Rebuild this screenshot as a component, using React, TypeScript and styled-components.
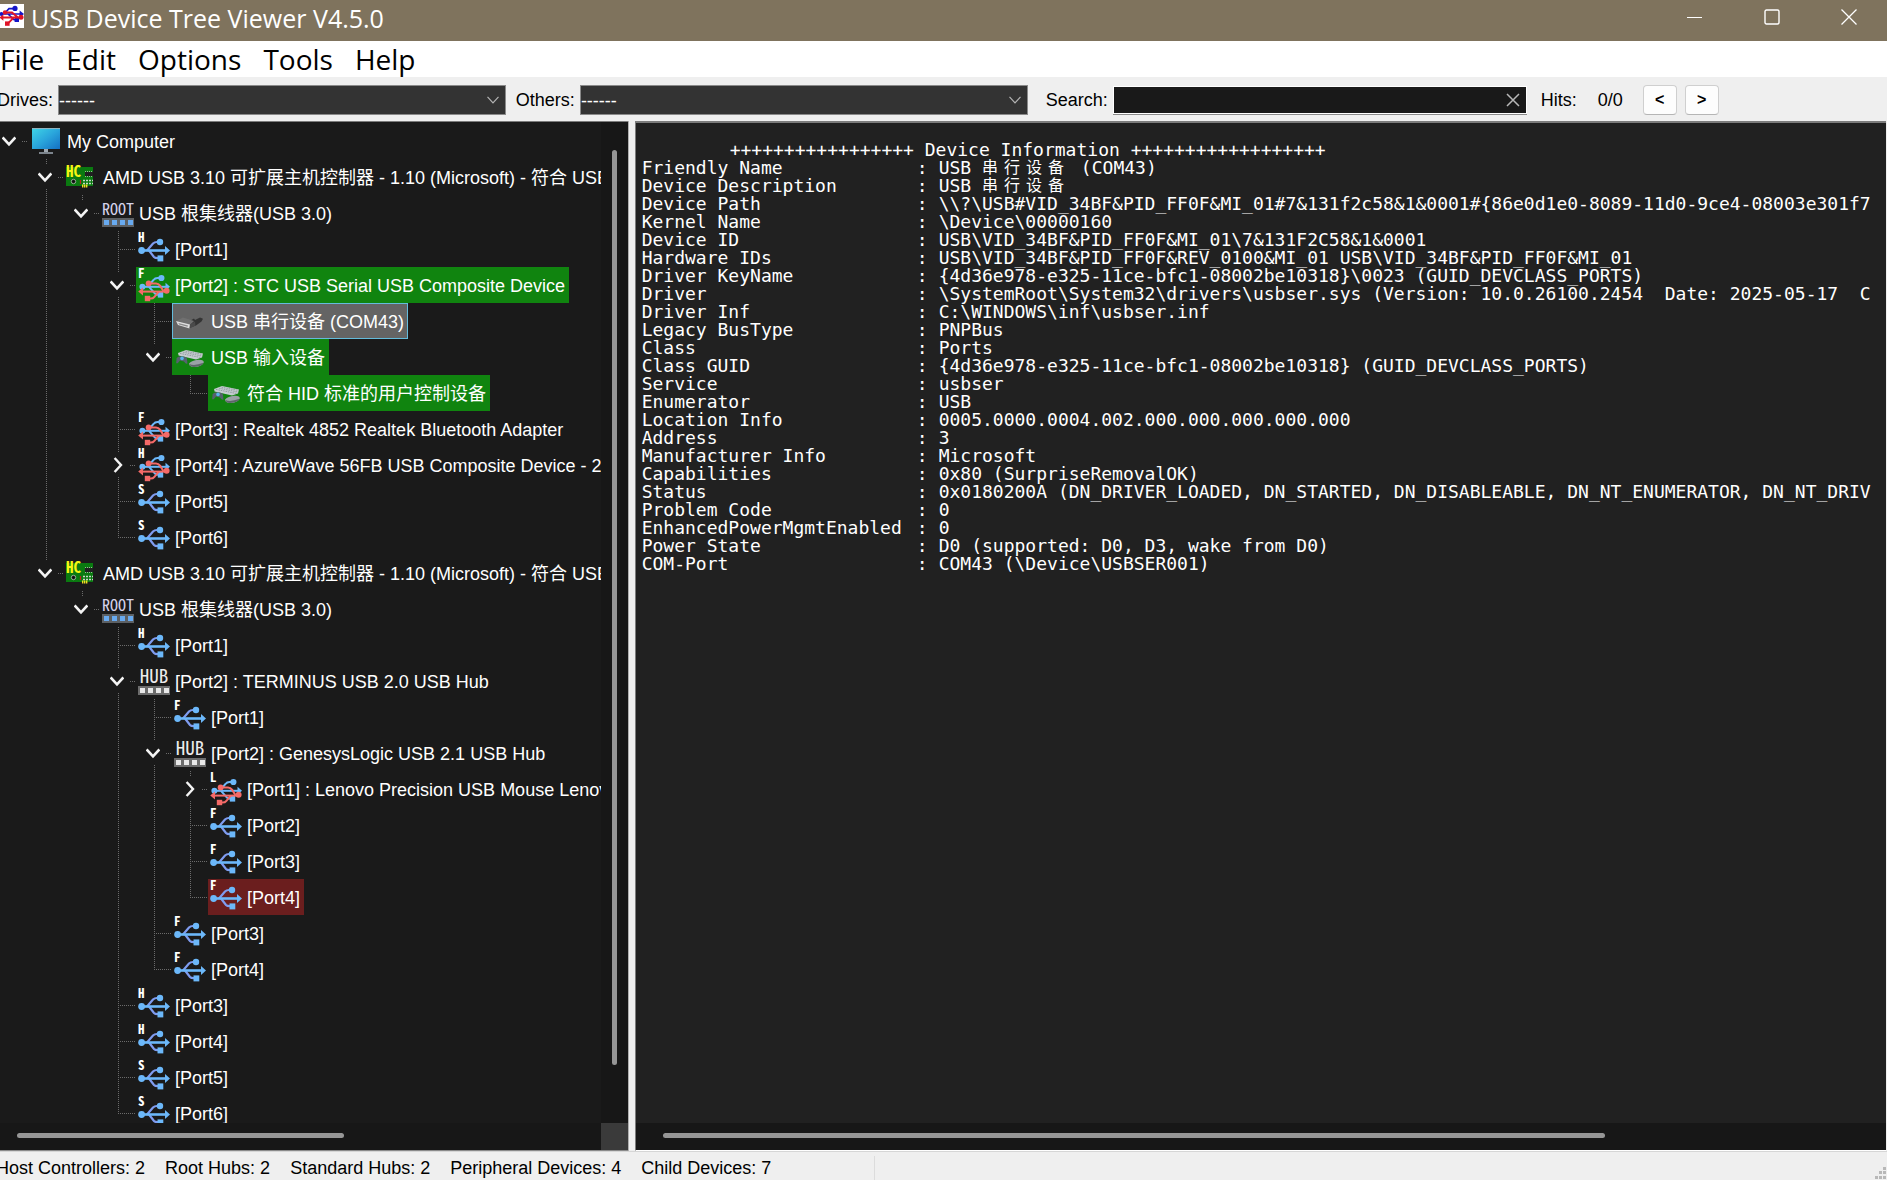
import React, { useState } from 'react';
import styled, { createGlobalStyle, css } from 'styled-components';

const GlobalStyle = createGlobalStyle`
  * { box-sizing: border-box; }
  body { margin: 0; background: #efefef; overflow: hidden; }
  button, input, select { font: inherit; }
`;

const uiFont = css`font-family: "Liberation Sans", "Noto Sans CJK SC", sans-serif;`;
const shellFont = css`font-family: "Open Sans", "Noto Sans CJK SC", sans-serif;`;

const Window = styled.div`
  ${uiFont}
  display: flex;
  flex-direction: column;
  height: 100vh;
  font-size: 18px;
  color: #000;
  background: #efefef;
`;

const TitleBar = styled.header`
  ${shellFont}
  display: flex;
  align-items: flex-start;
  height: 41px;
  flex: none;
  padding-top: 4px;
  background: #7f735d;
  color: #fff;
`;

const Title = styled.h1`
  margin: 0;
  padding-left: 6px;
  flex: 1;
  font-size: 25px;
  line-height: 28px;
  font-weight: 400;
`;

const Caption = styled.button`
  width: 77px;
  height: 26px;
  padding: 0;
  border: 0;
  background: none;
  color: inherit;
  display: grid;
  place-items: center;
`;

const MenuBar = styled.nav`
  ${shellFont}
  display: flex;
  flex: none;
  height: 36px;
  gap: 22px;
  background: #fff;
`;

const MenuItem = styled.button`
  padding: 0;
  border: 0;
  background: none;
  font-size: 28px;
  line-height: 36px;
`;

const Toolbar = styled.div`
  display: flex;
  align-items: center;
  flex: none;
  height: 44px;
  padding-top: 2px;
  overflow: hidden;
`;

const Label = styled.label<{ $lead: number }>`
  white-space: nowrap;
  margin-left: ${p => p.$lead}px;
  margin-right: 5px;
`;

const SelectBox = styled.div`
  position: relative;
  display: flex;
  flex: 450 1 0;
  height: 30px;
  svg { position: absolute; right: 7px; top: 9px; pointer-events: none; color: #b4b4b4; }
`;

const Select = styled.select`
  width: 100%;
  appearance: none;
  border: 1px solid #8a8a8a;
  border-radius: 0;
  background: #333;
  color: #fff;
  padding: 2px 0 0;
`;

const SearchBox = styled.div`
  display: flex;
  align-items: center;
  flex: 414 1 0;
  height: 28px;
  background: #191919;
  border: 1px solid #fff;
  box-shadow: 0 1px 0 #8a8a8a;
`;

const SearchInput = styled.input`
  flex: 1;
  min-width: 0;
  border: 0;
  outline: 0;
  background: none;
  color: #fff;
`;

const ClearButton = styled.button`
  display: grid;
  place-items: center;
  width: 26px;
  height: 26px;
  padding: 0;
  border: 0;
  background: none;
  color: #b8b8b8;
`;

const Hits = styled.div`
  display: flex;
  gap: 21px;
  padding: 0 20px 0 14px;
`;

const StepButton = styled.button`
  width: 34px;
  height: 30px;
  margin-right: 8px;
  padding: 0;
  border: 1px solid #cfcfcf;
  border-bottom-color: #b5b5b5;
  border-radius: 4px;
  background: #fdfdfd;
  font-weight: 700;
  font-size: 16px;
`;

const ToolbarEnd = styled.div`
  flex: 161 1 0;
`;

const Main = styled.main`
  display: flex;
  flex: 1;
  min-height: 0;
`;

const TreePane = styled.section`
  flex: 628 1 0;
  min-width: 0;
  display: grid;
  grid-template: minmax(0, 1fr) 27px / minmax(0, 1fr) 27px;
  background: #1a1a1a;
  color: #fff;
  border-top: 1px solid #7c7c7c;
  border-bottom: 1px solid #8a8a8a;
`;

const InfoPane = styled.section`
  flex: 1251 1 0;
  min-width: 0;
  margin-right: 1px;
  display: grid;
  grid-template: minmax(0, 1fr) 27px / minmax(0, 1fr);
  background: #212121;
  color: #fff;
  border-top: 2px solid #7c7c7c;
  border-left: 1px solid #7c7c7c;
  border-bottom: 1px solid #fff;
`;

const Splitter = styled.div`
  flex: none;
  width: 7px;
  background: #efefef;
  border-left: 1px solid #b0b0b0;
`;

const Track = styled.div<{ $vertical?: boolean; $lead: number }>`
  display: flex;
  flex-direction: ${p => (p.$vertical ? 'column' : 'row')};
  align-items: center;
  background: #171717;
  padding: ${p => (p.$vertical ? `${p.$lead}px 0 0` : `0 0 2px ${p.$lead}px`)};
`;

const Thumb = styled.div<{ $vertical?: boolean; $share: number }>`
  background: #969696;
  border-radius: 3px;
  ${p => (p.$vertical ? `width: 5px; height: ${p.$share}%;` : `height: 5px; width: ${p.$share}%;`)}
`;

const Corner = styled.div`
  background: #3a3a3a;
`;

const Tree = styled.ul`
  margin: 0;
  padding: 1px 0 0;
  list-style: none;
  overflow: hidden;
`;

const Row = styled.li`
  display: flex;
  height: 36px;
`;

type Vertical = 'none' | 'full' | 'end' | 'stub' | 'gap';

const dotsDown = 'repeating-linear-gradient(#6c6c6c 0 1px, transparent 1px 2px)';
const dotsAcross = 'repeating-linear-gradient(90deg, #6c6c6c 0 1px, transparent 1px 2px)';

const verticalLayers: Record<Vertical, string> = {
  none: 'none',
  full: `${dotsDown} right 17px top / 1px 36px no-repeat`,
  end: `${dotsDown} right 17px top / 1px 18px no-repeat`,
  stub: `${dotsDown} right 17px top / 1px 5px no-repeat`,
  gap: `${dotsDown} right 17px top / 1px 5px no-repeat, ${dotsDown} right 17px bottom / 1px 6px no-repeat`,
};

const Guide = styled.span<{ $first: boolean; $vertical: Vertical }>`
  flex: none;
  display: flex;
  align-items: center;
  justify-content: flex-end;
  width: ${p => (p.$first ? 28 : 36)}px;
  background: ${p => verticalLayers[p.$vertical]};
`;

const Connector = styled.span<{ $short: boolean }>`
  flex: none;
  width: ${p => (p.$short ? 6 : 18)}px;
  height: 1px;
  background: ${dotsAcross};
`;

const Toggle = styled.button`
  flex: none;
  width: 18px;
  height: 18px;
  margin-right: 4px;
  padding: 0;
  border: 0;
  background: none;
  color: #f4f4f4;
  display: grid;
  place-items: center;
`;

type Tone = 'plain' | 'green' | 'selected' | 'red';

const toneStyles = {
  plain: css``,
  green: css`background: #10840f;`,
  selected: css`background: #646464; box-shadow: inset 0 0 0 1px #64bcdc;`,
  red: css`background: #6b1e1e;`,
};

const Item = styled.span<{ $tone: Tone }>`
  flex: none;
  display: flex;
  align-items: center;
  gap: 5px;
  padding: 0 4px 0 2px;
  white-space: nowrap;
  ${p => toneStyles[p.$tone]}
`;

const ItemText = styled.span`
  line-height: 20px;
  padding-top: 2px;
`;

const NodeSvg = styled.svg`
  width: 32px;
  height: 36px;
  flex: none;
  overflow: visible;
`;

const ReportBox = styled.div`
  padding: 18px 4px 0 6px;
  overflow: hidden;
`;

const Report = styled.table`
  border-collapse: collapse;
  font-family: "DejaVu Sans Mono", "Noto Sans CJK SC", monospace;
  font-size: 18px;
  line-height: 18px;
  white-space: pre;
  caption { padding-left: 88px; text-align: left; }
  th, td { padding: 0; height: 18px; text-align: left; font-weight: 400; vertical-align: top; }
  th { min-width: 275px; }
  td:nth-child(2) { min-width: 22px; }
`;

const WideGlyph = styled.span`
  display: inline-block;
  width: 22px;
  height: 18px;
  font-size: 16px;
  line-height: 18px;
  vertical-align: top;
`;

const StatusBar = styled.footer`
  display: flex;
  align-items: center;
  flex: none;
  height: 29px;
  padding-top: 4px;
  border-top: 1px solid #d6d6d6;
  overflow: hidden;
`;

const Counter = styled.span`
  white-space: nowrap;
`;

const Counters = styled.div`
  display: flex;
  gap: 20px;
  flex: 878 1 0;
  height: 100%;
  margin-left: -4px;
  align-items: center;
  border-right: 1px solid #dcdcdc;
`;

const StatusEnd = styled.div`
  display: flex;
  justify-content: flex-end;
  align-items: flex-end;
  flex: 1013 1 0;
  height: 100%;
`;

/* ---------- drawings ---------- */

const BLUE = '#6cb8fa';
const RED = '#f46a68';
const ICON_FONT = 'Noto Sans Mono CJK SC, Noto Sans Mono CJK JP, Liberation Sans, sans-serif';

const Letter = ({ children }: { children: string }) => (
  <text x="0" y="11" fill="#fff" fontSize="13" fontWeight="700" fontFamily={ICON_FONT}>
    {children}
  </text>
);

const PortIcon = ({ speed }: { speed: string }) => (
  <NodeSvg viewBox="0 0 32 36" aria-hidden="true">
    <Letter>{speed}</Letter>
    <g fill="none" strokeWidth="2.2">
      <path d="M9 19.5 L15 12.6 Q16.5 11 19 11 H22" stroke="#7f9cf0" />
      <path d="M11 19.5 L16 26 Q17 27.2 20 27.2" stroke="#7f9cf0" />
      <path d="M3 19.5 H28" stroke={BLUE} strokeWidth="2.6" />
    </g>
    <g fill={BLUE}>
      <circle cx="3.6" cy="19.5" r="3.4" />
      <circle cx="22" cy="11" r="3.2" />
      <rect x="19.5" y="24.4" width="5.8" height="6" />
      <path d="M27 15 L32 19.5 L27 24 Z" />
    </g>
  </NodeSvg>
);

const DeviceIcon = ({ speed }: { speed: string }) => (
  <NodeSvg viewBox="0 0 32 36" aria-hidden="true">
    <Letter>{speed}</Letter>
    <g fill="none" stroke={BLUE} strokeWidth="2">
      <path d="M4 19.8 H28" />
      <path d="M10 19.5 L15.5 13 Q17 11 19.5 11 H23" />
      <path d="M11 19.8 L17 26.6 Q18 27.8 21 27.8" />
    </g>
    <g fill={BLUE}>
      <circle cx="4.4" cy="19.8" r="3" />
      <circle cx="23.4" cy="11" r="3.1" />
      <rect x="19.8" y="25" width="5.4" height="5.6" />
      <path d="M27.5 15.8 L32 19.8 L27.5 23.6 Z" />
    </g>
    <g fill="none" stroke={RED} strokeWidth="2">
      <path d="M4 24.6 H28" />
      <path d="M10.5 16.4 H18 Q20.5 16.4 22 18.6 L25.4 24" />
      <path d="M9.5 31.6 H12.5 Q15 31.6 16.4 29.8 L20.8 24.6" />
    </g>
    <g fill={RED}>
      <circle cx="10.6" cy="16.4" r="2.9" />
      <circle cx="28.6" cy="23.8" r="3" />
      <rect x="6.8" y="28.8" width="5.4" height="5.4" />
      <path d="M5 20.6 L0.2 24.6 L5 28.4 Z" />
    </g>
  </NodeSvg>
);

const HubIcon = ({ root }: { root?: boolean }) => (
  <NodeSvg viewBox="0 0 32 36" aria-hidden="true">
    <text
      x="16"
      y="20"
      textAnchor="middle"
      fill={root ? '#d4d2ea' : '#ececec'}
      fontSize={root ? 16 : 19}
      fontFamily={ICON_FONT}
    >
      {root ? 'ROOT' : 'HUB'}
    </text>
    <rect x="0" y="23" width="32" height="9" fill={root ? '#5c6064' : '#6c6c6c'} />
    {[2, 10, 18, 26].map(x => (
      <rect key={x} x={x} y="25" width="5" height="5" fill={root ? '#68aaf0' : '#e8e8e8'} />
    ))}
  </NodeSvg>
);

const ControllerIcon = () => (
  <NodeSvg viewBox="0 0 32 36" aria-hidden="true">
    <rect x="0" y="8" width="27" height="19" fill="#0a7a10" />
    <text x="0" y="18" fill="#f6f614" fontSize="15" fontWeight="700" fontFamily={ICON_FONT}>
      HC
    </text>
    <rect x="19" y="13" width="8" height="4" fill="#202020" />
    <path d="M19 12.5 H27 M19 17.5 H27" stroke="#9ab89a" strokeDasharray="1 1" />
    <circle cx="7.5" cy="22.5" r="2.2" fill="#101010" stroke="#b8c8b8" strokeWidth="0.8" />
    <path d="M17 21.5 H27 M17 24.5 H27" stroke="#c8d8c8" strokeWidth="1.4" strokeDasharray="2 1" />
    <path d="M14.5 21 V25" stroke="#c02020" strokeWidth="1.2" />
    <path d="M16 27 H22" stroke="#f0e020" strokeWidth="3" strokeDasharray="1.4 0.6" />
  </NodeSvg>
);

const ComputerIcon = () => (
  <NodeSvg viewBox="0 0 32 36" aria-hidden="true">
    <defs>
      <linearGradient id="screen" x1="0" y1="0" x2="1" y2="1">
        <stop offset="0" stopColor="#3fd6e6" />
        <stop offset="0.5" stopColor="#2aa6dc" />
        <stop offset="1" stopColor="#1470c4" />
      </linearGradient>
    </defs>
    <rect x="2" y="5" width="28" height="21" fill="url(#screen)" />
    <path d="M2 5.5 H30" stroke="#8fb4c0" />
    <path d="M14 26 H18 V29 H14 Z" fill="#a0a8b0" />
    <path d="M9 29 H23 V31 H9 Z" fill="#7c848c" />
  </NodeSvg>
);

const SerialIcon = () => (
  <NodeSvg viewBox="0 0 32 36" aria-hidden="true">
    <path d="M14 19 L20 15.5 L21 17 L26 14.6 L29 15.8 L27.5 18.6 L22 22.6 L15 25 Z" fill="#343434" />
    <path d="M3 17.6 L9 14.6 L20 18 L16 22 Z" fill="#707070" />
    <path d="M2 18 L16 21.6 L15.6 25.6 L4 22 Z" fill="#dedede" />
    <path d="M4.4 20 L14 22.6 L13.6 23.8 L5 21.4 Z" fill="#8a8a8a" />
    <path d="M16 21.6 L21 18.6 L21.4 22.4 L15.6 25.6 Z" fill="#4a4a4a" />
  </NodeSvg>
);

const InputIcon = () => (
  <NodeSvg viewBox="0 0 32 36" aria-hidden="true">
    <path d="M4 14 L12 11 L29 14.6 L28 18.4 L22 20.4 L4.6 16.4 Z" fill="#c4ccd0" />
    <path d="M6 14.4 L27 18.6 M9 13.2 L28 17 M11.6 12.2 L28.6 15.4" stroke="#8a9498" strokeWidth="0.8" strokeDasharray="1.6 0.8" />
    <path d="M2.6 19 Q5 16.6 9 17.6 Q12.6 18 13 20 L13.4 24.6 Q12 25.6 10 22.4 L6 21.6 Q3.4 25.4 2.2 24 Z" fill="#56626e" />
    <circle cx="8" cy="19.4" r="1.8" fill="#58b4ec" />
    <path d="M15 24.4 Q18 21.4 24 20.8 Q30 20.4 29.8 23.4 Q28 27.6 20 28 Q15 27.6 15 24.4 Z" fill="#9aa2a6" />
    <path d="M15.4 25 Q20 27.4 29.6 23.8 Q28 27.6 20 28 Q16 27.6 15.4 25 Z" fill="#5e666a" />
  </NodeSvg>
);

const AppIcon = () => (
  <svg width="25" height="24" viewBox="0 0 25 24" aria-hidden="true">
    <rect width="24" height="24" fill="#fff" />
    <g fill="none" stroke="#1414c8" strokeWidth="1.6">
      <path d="M0 10 H21 M4 10 L9 4.6 H15 M8 10 L14 15.6 H17" />
    </g>
    <g fill="#1414c8">
      <circle cx="1.4" cy="10" r="2" />
      <circle cx="15" cy="4.4" r="2.6" />
      <rect x="14.6" y="13.6" width="4.4" height="4.4" />
      <path d="M19.6 6.6 L24 10 L19.6 13.4 Z" />
    </g>
    <g fill="none" stroke="#e01428" strokeWidth="2">
      <path d="M2 13.4 H22 M5 8.4 H12 L18 13.4 M8 19.4 L14 13.4" />
    </g>
    <g fill="#e01428">
      <circle cx="5" cy="8.4" r="2.2" />
      <circle cx="21" cy="13.2" r="2.5" />
      <rect x="5" y="17.4" width="4.6" height="4.4" />
      <path d="M3.4 10.4 L-0.6 13.4 L3.4 16.8 Z" />
    </g>
  </svg>
);

const ChevronDown = ({ size = 14, weight = 2.6 }: { size?: number; weight?: number }) => (
  <svg width={size} height={size} viewBox="0 0 14 14" fill="none" stroke="currentColor" strokeWidth={weight} aria-hidden="true">
    <path d="M0.6 3.4 L7 10.4 L13.4 3.4" />
  </svg>
);

const ChevronRight = () => (
  <svg width="14" height="16" viewBox="0 0 14 16" fill="none" stroke="currentColor" strokeWidth="2.4" aria-hidden="true">
    <path d="M4.6 1 L11 8 L4.6 15" />
  </svg>
);

/* ---------- data ---------- */

type Kind = 'computer' | 'controller' | 'root' | 'hub' | 'port' | 'device' | 'serial' | 'input';

interface Node {
  kind: Kind;
  text: string;
  speed?: string;
  tone?: Tone;
  closed?: boolean;
  children?: Node[];
}

const port = (n: number, speed: string, tone?: Tone): Node => ({ kind: 'port', text: `[Port${n}]`, speed, tone });

const controllerName = 'AMD USB 3.10 可扩展主机控制器 - 1.10 (Microsoft) - 符合 USB';

const tree: Node = {
  kind: 'computer',
  text: 'My Computer',
  children: [
    {
      kind: 'controller',
      text: controllerName,
      children: [
        {
          kind: 'root',
          text: 'USB 根集线器(USB 3.0)',
          children: [
            port(1, 'H'),
            {
              kind: 'device',
              speed: 'F',
              tone: 'green',
              text: '[Port2] : STC USB Serial USB Composite Device',
              children: [
                { kind: 'serial', tone: 'selected', text: 'USB 串行设备 (COM43)' },
                {
                  kind: 'input',
                  tone: 'green',
                  text: 'USB 输入设备',
                  children: [{ kind: 'input', tone: 'green', text: '符合 HID 标准的用户控制设备' }],
                },
              ],
            },
            { kind: 'device', speed: 'F', text: '[Port3] : Realtek 4852 Realtek Bluetooth Adapter' },
            { kind: 'device', speed: 'H', closed: true, text: '[Port4] : AzureWave 56FB USB Composite Device - 2' },
            port(5, 'S'),
            port(6, 'S'),
          ],
        },
      ],
    },
    {
      kind: 'controller',
      text: controllerName,
      children: [
        {
          kind: 'root',
          text: 'USB 根集线器(USB 3.0)',
          children: [
            port(1, 'H'),
            {
              kind: 'hub',
              text: '[Port2] : TERMINUS USB 2.0 USB Hub',
              children: [
                port(1, 'F'),
                {
                  kind: 'hub',
                  text: '[Port2] : GenesysLogic USB 2.1 USB Hub',
                  children: [
                    { kind: 'device', speed: 'L', closed: true, text: '[Port1] : Lenovo Precision USB Mouse Lenovo' },
                    port(2, 'F'),
                    port(3, 'F'),
                    port(4, 'F', 'red'),
                  ],
                },
                port(3, 'F'),
                port(4, 'F'),
              ],
            },
            port(3, 'H'),
            port(4, 'H'),
            port(5, 'S'),
            port(6, 'S'),
          ],
        },
      ],
    },
  ],
};

const facts: [string, string][] = [
  ['Friendly Name', 'USB 串行设备 (COM43)'],
  ['Device Description', 'USB 串行设备'],
  ['Device Path', '\\\\?\\USB#VID_34BF&PID_FF0F&MI_01#7&131f2c58&1&0001#{86e0d1e0-8089-11d0-9ce4-08003e301f7'],
  ['Kernel Name', '\\Device\\00000160'],
  ['Device ID', 'USB\\VID_34BF&PID_FF0F&MI_01\\7&131F2C58&1&0001'],
  ['Hardware IDs', 'USB\\VID_34BF&PID_FF0F&REV_0100&MI_01 USB\\VID_34BF&PID_FF0F&MI_01'],
  ['Driver KeyName', '{4d36e978-e325-11ce-bfc1-08002be10318}\\0023 (GUID_DEVCLASS_PORTS)'],
  ['Driver', '\\SystemRoot\\System32\\drivers\\usbser.sys (Version: 10.0.26100.2454  Date: 2025-05-17  C'],
  ['Driver Inf', 'C:\\WINDOWS\\inf\\usbser.inf'],
  ['Legacy BusType', 'PNPBus'],
  ['Class', 'Ports'],
  ['Class GUID', '{4d36e978-e325-11ce-bfc1-08002be10318} (GUID_DEVCLASS_PORTS)'],
  ['Service', 'usbser'],
  ['Enumerator', 'USB'],
  ['Location Info', '0005.0000.0004.002.000.000.000.000.000'],
  ['Address', '3'],
  ['Manufacturer Info', 'Microsoft'],
  ['Capabilities', '0x80 (SurpriseRemovalOK)'],
  ['Status', '0x0180200A (DN_DRIVER_LOADED, DN_STARTED, DN_DISABLEABLE, DN_NT_ENUMERATOR, DN_NT_DRIV'],
  ['Problem Code', '0'],
  ['EnhancedPowerMgmtEnabled', '0'],
  ['Power State', 'D0 (supported: D0, D3, wake from D0)'],
  ['COM-Port', 'COM43 (\\Device\\USBSER001)'],
];

const counters = ['Host Controllers: 2', 'Root Hubs: 2', 'Standard Hubs: 2', 'Peripheral Devices: 4', 'Child Devices: 7'];

/* ---------- tree ---------- */

const NodeIcon = ({ node }: { node: Node }) => {
  switch (node.kind) {
    case 'computer': return <ComputerIcon />;
    case 'controller': return <ControllerIcon />;
    case 'root': return <HubIcon root />;
    case 'hub': return <HubIcon />;
    case 'port': return <PortIcon speed={node.speed!} />;
    case 'device': return <DeviceIcon speed={node.speed!} />;
    case 'serial': return <SerialIcon />;
    default: return <InputIcon />;
  }
};

/* `open` holds, for each ancestor column, whether its branch line continues below. */
const Branch = ({ node, open, last }: { node: Node; open: boolean[]; last: boolean }) => {
  const level = open.length;
  const [expanded, setExpanded] = useState(!node.closed);
  const hasToggle = Boolean(node.children || node.closed);
  const own: Vertical = level === 0 ? 'none' : hasToggle ? (last ? 'stub' : 'gap') : last ? 'end' : 'full';
  return (
    <>
      <Row role="treeitem" aria-level={level + 1} aria-expanded={hasToggle ? expanded : undefined}>
        {open.map((line, i) => (
          <Guide key={i} $first={i === 0} $vertical={line ? 'full' : 'none'} />
        ))}
        <Guide $first={level === 0} $vertical={own}>
          {hasToggle && (
            <Toggle aria-label={`Toggle ${node.text}`} onClick={() => setExpanded(!expanded)}>
              {expanded ? <ChevronDown /> : <ChevronRight />}
            </Toggle>
          )}
          <Connector $short={hasToggle} />
        </Guide>
        <Item $tone={node.tone ?? 'plain'}>
          <NodeIcon node={node} />
          <ItemText>{node.text}</ItemText>
        </Item>
      </Row>
      {expanded &&
        node.children?.map((child, i) => (
          <Branch key={i} node={child} open={[...open, !last]} last={i === node.children!.length - 1} />
        ))}
    </>
  );
};

/* CJK characters take two text cells in the report. */
const Cells = ({ text }: { text: string }) => (
  <>
    {text.split(/([\u4e00-\u9fff])/).map((part, i) =>
      /[\u4e00-\u9fff]/.test(part) ? <WideGlyph key={i}>{part}</WideGlyph> : part,
    )}
  </>
);

export default function App() {
  const [query, setQuery] = useState('');
  return (
    <Window>
      <GlobalStyle />
      <TitleBar>
        <AppIcon />
        <Title>USB Device Tree Viewer V4.5.0</Title>
        <Caption aria-label="Minimize">
          <svg width="16" height="16" viewBox="0 0 16 16" stroke="currentColor"><path d="M0 8.5 H15" /></svg>
        </Caption>
        <Caption aria-label="Maximize">
          <svg width="16" height="16" viewBox="0 0 16 16" fill="none" stroke="currentColor" strokeWidth="1.4"><rect x="1" y="1" width="14" height="14" rx="1.5" /></svg>
        </Caption>
        <Caption aria-label="Close">
          <svg width="16" height="16" viewBox="0 0 16 16" stroke="currentColor" strokeWidth="1.3"><path d="M0.5 0.5 L15.5 15.5 M15.5 0.5 L0.5 15.5" /></svg>
        </Caption>
      </TitleBar>
      <MenuBar>
        {['File', 'Edit', 'Options', 'Tools', 'Help'].map(name => (
          <MenuItem key={name}>{name}</MenuItem>
        ))}
      </MenuBar>
      <Toolbar>
        <Label htmlFor="drives" $lead={-3}>Drives:</Label>
        <SelectBox>
          <Select id="drives"><option>------</option></Select>
          <ChevronDown size={12} weight={1.4} />
        </SelectBox>
        <Label htmlFor="others" $lead={10}>Others:</Label>
        <SelectBox>
          <Select id="others"><option>------</option></Select>
          <ChevronDown size={12} weight={1.4} />
        </SelectBox>
        <Label htmlFor="search" $lead={18}>Search:</Label>
        <SearchBox>
          <SearchInput id="search" value={query} onChange={e => setQuery(e.target.value)} />
          <ClearButton aria-label="Clear search" onClick={() => setQuery('')}>
            <svg width="14" height="14" viewBox="0 0 14 14" stroke="currentColor" strokeWidth="1.5"><path d="M1 1 L13 13 M13 1 L1 13" /></svg>
          </ClearButton>
        </SearchBox>
        <Hits><span>Hits:</span><span>0/0</span></Hits>
        <StepButton>&lt;</StepButton>
        <StepButton>&gt;</StepButton>
        <ToolbarEnd />
      </Toolbar>
      <Main>
        <TreePane>
          <Tree role="tree" aria-label="USB devices">
            <Branch node={tree} open={[]} last />
          </Tree>
          <Track $vertical $lead={28}><Thumb $vertical $share={94} /></Track>
          <Track $lead={17}><Thumb $share={56} /></Track>
          <Corner />
        </TreePane>
        <Splitter />
        <InfoPane>
          <ReportBox>
            <Report>
              <caption>{'+'.repeat(17) + ' Device Information ' + '+'.repeat(18)}</caption>
              <tbody>
                {facts.map(([name, value]) => (
                  <tr key={name}>
                    <th scope="row">{name}</th>
                    <td>:</td>
                    <td><Cells text={value} /></td>
                  </tr>
                ))}
              </tbody>
            </Report>
          </ReportBox>
          <Track $lead={27}><Thumb $share={77} /></Track>
        </InfoPane>
      </Main>
      <StatusBar>
        <Counters>
          {counters.map(text => <Counter key={text}>{text}</Counter>)}
        </Counters>
        <StatusEnd>
          <svg width="13" height="13" viewBox="0 0 13 13" fill="#b8b8b8" aria-hidden="true">
            <path d="M9 0h3v3h-3z M5 4h3v3h-3z M9 4h3v3h-3z M1 9h3v3h-3z M5 9h3v3h-3z M9 9h3v3h-3z" />
          </svg>
        </StatusEnd>
      </StatusBar>
    </Window>
  );
}
